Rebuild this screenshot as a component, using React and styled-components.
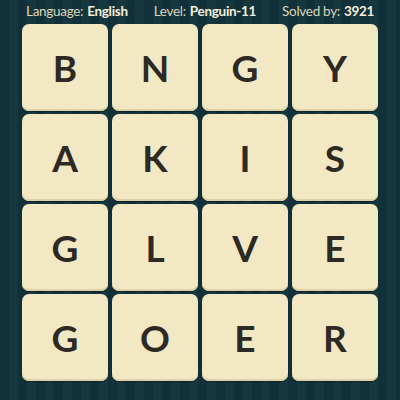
import React from 'react'
import styled, { createGlobalStyle } from 'styled-components'

const GlobalStyle = createGlobalStyle`
	html, body {
		margin: 0;
		padding: 0;
	}
	body {
		font-family: Lato, 'Noto Sans', sans-serif;
	}
`

const Wrapper = styled.div`
	width: 400px;
	height: 400px;
	overflow: hidden;
	background-color: #12313a;
	background-image: repeating-linear-gradient(
		90deg,
		#11303a 0px,
		#11303a 9px,
		#15383f 9px,
		#15383f 18px
	);
	display: flex;
	flex-direction: column;
	align-items: center;
`

const Header = styled.div`
	width: 356px;
	height: 24px;
	display: flex;
	justify-content: space-between;
	align-items: center;
	padding: 0 4px;
	box-sizing: border-box;
	font-size: 13.5px;
	letter-spacing: -0.3px;
	color: #d9d5bb;
	margin-top: -1px;
`

const Info = styled.div`
	white-space: nowrap;

	b {
		color: #f4efdc;
		font-weight: 700;
		margin-left: 4px;
	}
`

const Board = styled.div`
	display: grid;
	grid-template-columns: repeat(4, 86.5px);
	grid-auto-rows: 86.5px;
	gap: 3.5px;
	margin-top: 1px;
`

const Tile = styled.div`
	display: flex;
	justify-content: center;
	align-items: center;
	background: #f2e9c4;
	border-radius: 7px;
	box-shadow: inset 0 -2px 0 #ddd2a6, 0 1px 1px rgba(0, 0, 0, 0.35);
	font-size: 37px;
	font-weight: 700;
	color: #2d2925;
	user-select: none;
`

const letters = 'BNGYAKISGLVEGOER'.split('')

export default function App() {
	return (
		<Wrapper>
			<GlobalStyle />
			<Header>
				<Info>Language:<b>English</b></Info>
				<Info>Level:<b>Penguin-11</b></Info>
				<Info>Solved by:<b>3921</b></Info>
			</Header>
			<Board>
				{letters.map((letter, index) => (
					<Tile key={index}>{letter}</Tile>
				))}
			</Board>
		</Wrapper>
	)
}
